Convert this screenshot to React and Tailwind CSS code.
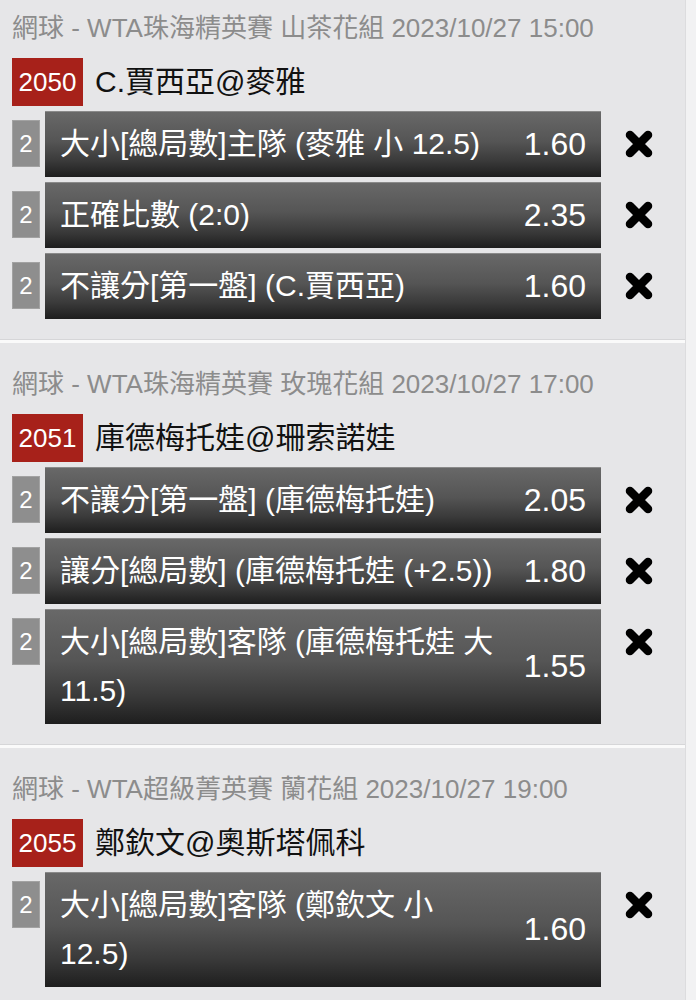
import React from "react";

const FONT = { fontFamily: '"Liberation Sans", "Noto Sans CJK TC", sans-serif' };

const sections = [
  {
    header: "網球 - WTA珠海精英賽 山茶花組 2023/10/27 15:00",
    id: "2050",
    title: "C.賈西亞@麥雅",
    first: true,
    rows: [
      { lines: ["大小[總局數]主隊 (麥雅 小 12.5)"], odds: "1.60" },
      { lines: ["正確比數 (2:0)"], odds: "2.35" },
      { lines: ["不讓分[第一盤] (C.賈西亞)"], odds: "1.60" },
    ],
  },
  {
    header: "網球 - WTA珠海精英賽 玫瑰花組 2023/10/27 17:00",
    id: "2051",
    title: "庫德梅托娃@珊索諾娃",
    rows: [
      { lines: ["不讓分[第一盤] (庫德梅托娃)"], odds: "2.05" },
      { lines: ["讓分[總局數] (庫德梅托娃 (+2.5))"], odds: "1.80" },
      { lines: ["大小[總局數]客隊 (庫德梅托娃 大", "11.5)"], odds: "1.55" },
    ],
  },
  {
    header: "網球 - WTA超級菁英賽 蘭花組 2023/10/27 19:00",
    id: "2055",
    title: "鄭欽文@奧斯塔佩科",
    last: true,
    rows: [{ lines: ["大小[總局數]客隊 (鄭欽文 小", "12.5)"], odds: "1.60" }],
  },
];

function CloseIcon() {
  return (
    <svg width="30" height="30" viewBox="0 0 30 30">
      <path
        d="M6 6 L24 24 M24 6 L6 24"
        stroke="#000"
        strokeWidth="8.5"
        strokeLinecap="round"
        fill="none"
      />
    </svg>
  );
}

function Row({ row }) {
  return (
    <div className="flex items-start">
      <div className="mt-[9px] flex h-[47px] w-[28px] shrink-0 items-center justify-center border border-[#a2a2a2] bg-[#8e8e8e] text-[24px] leading-none text-white">
        2
      </div>
      <div className="ml-[5px] flex w-[556px] shrink-0 items-center border-t border-[#8a8a8a] bg-[linear-gradient(180deg,#686868_0%,#555555_45%,#3a3a3a_75%,#1e1e1e_100%)] pb-[9px] pl-[15px] pr-[15px] pt-[7px] text-white">
        <div className="flex-1 whitespace-nowrap text-[30px] leading-[49px]">
          {row.lines.map((l, i) => (
            <div key={i}>{l}</div>
          ))}
        </div>
        <div className="ml-3 text-[32px] leading-none">{row.odds}</div>
      </div>
      <div className="ml-[23px] mt-[18px]">
        <CloseIcon />
      </div>
    </div>
  );
}

function Section({ s }) {
  return (
    <div
      className={
        (s.first ? "pt-[13px] " : "pt-[26px] ") +
        "bg-[#e6e6e8] pb-5 pl-3"
      }
    >
      <div className="text-[26px] leading-[30px] text-[#8c8c8c] whitespace-nowrap">{s.header}</div>
      <div className="mt-[15px] flex items-center">
        <div className="flex h-[48px] w-[71px] items-center justify-center bg-[#a7211a] text-[26px] leading-none text-white">
          {s.id}
        </div>
        <div className="ml-3 text-[30px] leading-none text-[#111]">{s.title}</div>
      </div>
      <div className="mt-[5px] flex flex-col gap-[5px]">
        {s.rows.map((r, i) => (
          <Row key={i} row={r} />
        ))}
      </div>
    </div>
  );
}

export default function App() {
  return (
    <div className="min-h-screen bg-[#f2f2f3]" style={FONT}>
      <div className="w-[686px] min-h-screen border-r border-[#dcdcde] bg-[#e6e6e8]">
        {sections.map((s, i) => (
          <div key={i}>
            <Section s={s} />
            {!s.last && (
              <div className="h-[4px] border-t border-[#d6d6d8] bg-[#fafafa]" />
            )}
          </div>
        ))}
      </div>
    </div>
  );
}
